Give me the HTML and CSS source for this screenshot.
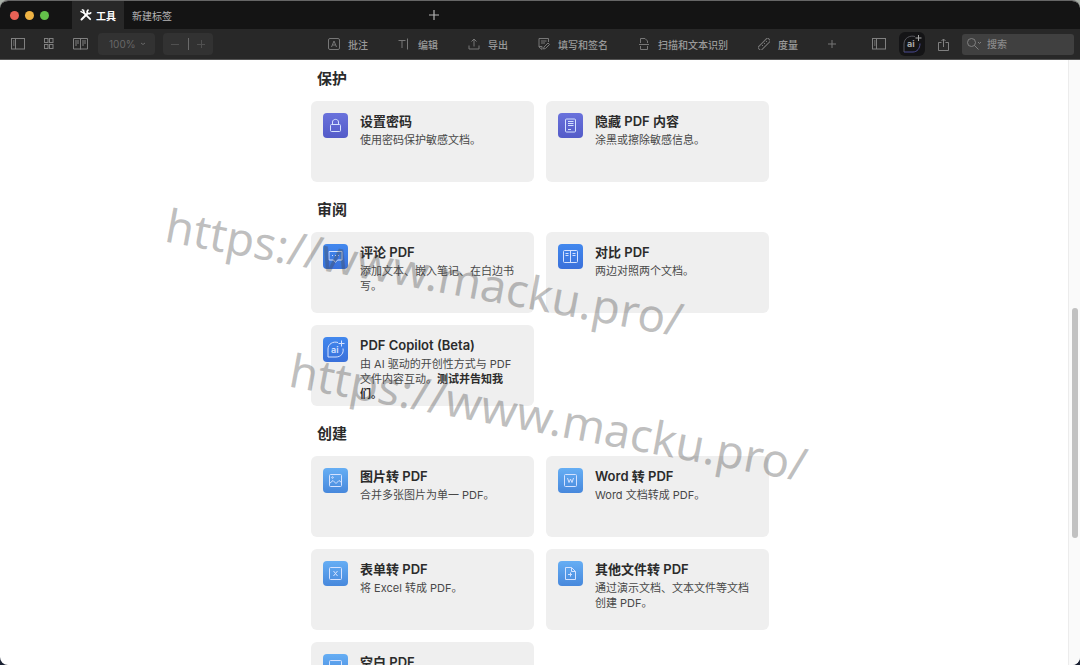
FILE: index.html
```html
<!DOCTYPE html>
<html lang="zh-CN">
<head>
    <meta charset="UTF-8">
    <meta name="viewport" content="width=device-width, initial-scale=1.0">
    <title>工具</title>
    <link rel="stylesheet" href="styles.css">
</head>
<body>
<div class="window">

    <header class="tabbar">
        <div class="lights">
            <span class="light red"></span>
            <span class="light yellow"></span>
            <span class="light green"></span>
        </div>
        <nav class="tabs">
            <button class="tab active">
                <svg width="12" height="12" viewBox="0 0 12 12" fill="none" stroke="currentColor" stroke-linecap="round"><path d="M4.2 4.2l6 6" stroke-width="1.8"/><path d="M1 2.6l1.600.8L4.200 4.200 3.600 1.400 2.400.9" stroke-width="1.500"/><path d="M1.500 10.500L7.500 4.500" stroke-width="2"/><path d="M8 1.200c-1 1-1 2.200-.3 2.900s2 .7 3-.3" stroke-width="1.700"/></svg>
                工具
            </button>
            <button class="tab">新建标签</button>
        </nav>
        <button class="new-tab" aria-label="新建">
            <svg width="10" height="10" viewBox="0 0 10 10" stroke="currentColor" stroke-width="1.200"><path d="M5 0v10M0 5h10"/></svg>
        </button>
    </header>

    <div class="toolbar">
        <div class="view-tools">
            <button class="icon-btn" aria-label="侧边栏">
                <svg width="14" height="12" viewBox="0 0 14 12" fill="none" stroke="currentColor"><rect x=".5" y=".5" width="13" height="10.500"/><path d="M4.500.5V11M2 3h1.500M2 5h1.500M2 7h1.500"/></svg>
            </button>
            <button class="icon-btn" aria-label="缩略图">
                <svg width="10" height="12" viewBox="0 0 10 12" fill="none" stroke="currentColor"><rect x=".5" y=".5" width="3.500" height="4"/><rect x="5.500" y=".5" width="3.500" height="4"/><rect x=".5" y="6.500" width="3.500" height="4"/><rect x="5.500" y="6.500" width="3.500" height="4"/></svg>
            </button>
            <button class="icon-btn" aria-label="双页">
                <svg width="15" height="12" viewBox="0 0 15 12" fill="none" stroke="currentColor"><path d="M.5.5h14v10.500H.5zM7.500.5v11M2 3h4M2 5h4M2 7h2M9 3h4M9 5h4M9 7h2"/></svg>
            </button>
            <div class="zoom">
                <select aria-label="缩放" disabled>
                    <option>100%</option>
                </select>
                <svg width="6" height="4" viewBox="0 0 6 4" fill="none" stroke="currentColor"><path d="M1 1l2 1.500L5 1"/></svg>
            </div>
            <div class="stepper">
                <button aria-label="缩小"><svg width="8" height="8" viewBox="0 0 8 8" stroke="currentColor"><path d="M0 4.500h8"/></svg></button>
                <span class="divider"></span>
                <button aria-label="放大"><svg width="8" height="8" viewBox="0 0 8 8" stroke="currentColor"><path d="M0 4.500h8M4.500 0v8"/></svg></button>
            </div>
        </div>

        <nav class="edit-tools">
            <button class="tool">
                <svg width="12" height="12" viewBox="0 0 12 12" fill="none" stroke="currentColor"><rect x=".5" y=".5" width="11" height="11" rx="1.500"/><path d="M3.500 9L6 3l2.500 6M4.500 7h3"/></svg>
                批注
            </button>
            <button class="tool">
                <svg width="12" height="12" viewBox="0 0 12 12" fill="none" stroke="currentColor"><path d="M.5 2.500h7M4 2.500V10M9.500.5v11"/></svg>
                编辑
            </button>
            <button class="tool">
                <svg width="12" height="12" viewBox="0 0 12 12" fill="none" stroke="currentColor"><path d="M1 7.500V11h10V7.500M6 8.500V1M3.500 3.500L6 1l2.500 2.500"/></svg>
                导出
            </button>
            <button class="tool">
                <svg width="12" height="12" viewBox="0 0 12 12" fill="none" stroke="currentColor"><path d="M4 11.500L1 9V.5h9.500V4M3 3h5.500M3 5h4M1 8.500h3v3M5.500 11l.5-2 4-4 1.500 1.500-4 4z"/></svg>
                填写和签名
            </button>
            <button class="tool">
                <svg width="12" height="12" viewBox="0 0 12 12" fill="none" stroke="currentColor"><path d="M2.500 5V.5H7L9.500 3v2M2.500 8v3.500h7V8M1 6.500h10"/></svg>
                扫描和文本识别
            </button>
            <button class="tool">
                <svg width="12" height="12" viewBox="0 0 12 12" fill="none" stroke="currentColor"><rect x="-1" y="4" width="14" height="4.500" rx="1" transform="rotate(-45 6 6)"/><path d="M4 7l1 1M6 5l1 1M8 3l1 1"/></svg>
                度量
            </button>
            <button class="icon-btn" aria-label="添加工具">
                <svg width="8" height="8" viewBox="0 0 8 8" stroke="currentColor"><path d="M0 4h8M4 0v8"/></svg>
            </button>
        </nav>

        <div class="side-tools">
            <button class="icon-btn" aria-label="面板">
                <svg width="14" height="12" viewBox="0 0 14 12" fill="none" stroke="currentColor"><rect x=".5" y=".5" width="13" height="10.500"/><path d="M4.500.5V11M2 3h1.500M2 5h1.500M2 7h1.500"/></svg>
            </button>
            <button class="ai-btn" aria-label="AI 助手">
                <svg width="20" height="20" viewBox="0 0 20 20" fill="none"><path d="M13 2.500C8 1 2 4 2 10v8" stroke="#55555c"/><path d="M2 18h9c4 0 7-3.500 7-8.500" stroke="#4a4a92"/><path d="M16.500 1v6M13.500 4h6" stroke="#a8a8a8"/><text x="5" y="13" class="ai-text">ai</text></svg>
            </button>
            <button class="icon-btn" aria-label="共享">
                <svg width="11" height="13" viewBox="0 0 11 13" fill="none" stroke="currentColor"><path d="M3.500 4.500h-3v8h10v-8h-3M5.500 9V1M3.500 3l2-2 2 2"/></svg>
            </button>
            <label class="search">
                <svg width="15" height="12" viewBox="0 0 15 12" fill="none" stroke="currentColor"><circle cx="4.500" cy="4.500" r="4"/><path d="M7.500 7.500l4 4M11 4l1.500 1.500L14 4"/></svg>
                <input type="search" placeholder="搜索" aria-label="搜索">
            </label>
        </div>
    </div>

    <main class="content">
        <section>
            <h2>保护</h2>
            <div class="cards">
                <a class="card" href="#">
                    <span class="badge protect"><svg width="15" height="15" viewBox="0 0 15 15"><rect x="2.500" y="6.500" width="10" height="7" rx="1"/><path d="M4.500 6.500V4c0-3.500 6-3.500 6 0v2.500"/></svg></span>
                    <div class="info">
                        <h3>设置密码</h3>
                        <p>使用密码保护敏感文档。</p>
                    </div>
                </a>
                <a class="card" href="#">
                    <span class="badge protect"><svg width="15" height="15" viewBox="0 0 15 15"><rect x="2.500" y="1" width="10" height="13" rx="1"/><path d="M5 3.500h5.500M5 5.500h5.500M5 7.500h5.500M5 11.500h3"/></svg></span>
                    <div class="info">
                        <h3>隐藏 PDF 内容</h3>
                        <p>涂黑或擦除敏感信息。</p>
                    </div>
                </a>
            </div>
        </section>

        <section>
            <h2>审阅</h2>
            <div class="cards">
                <a class="card" href="#">
                    <span class="badge review"><svg width="15" height="15" viewBox="0 0 15 15"><path d="M1 2.500h13v8.500H9.500L7.500 13.500 5.500 11H1zM4 6.500h1M7 6.500h1M10 6.500h1"/></svg></span>
                    <div class="info">
                        <h3>评论 PDF</h3>
                        <p>添加文本、嵌入笔记、在白边书写。</p>
                    </div>
                </a>
                <a class="card" href="#">
                    <span class="badge review"><svg width="15" height="15" viewBox="0 0 15 15"><rect x=".5" y="1.500" width="14" height="12" rx="1"/><path d="M7.500 1.500v12M2.500 4.500h3M2.500 6.500h3M9.500 4.500h3M9.500 6.500h3"/></svg></span>
                    <div class="info">
                        <h3>对比 PDF</h3>
                        <p>两边对照两个文档。</p>
                    </div>
                </a>
                <a class="card" href="#">
                    <span class="badge review"><svg width="19" height="19" viewBox="0 0 19 19"><path d="M12 2.500C7 1 2 4 2 9v8h8c5 0 8-4 7-8.500M15.500.5v6M12.500 3.500h6"/><text x="5" y="13" class="badge-text">ai</text></svg></span>
                    <div class="info">
                        <h3>PDF Copilot (Beta)</h3>
                        <p>由 AI 驱动的开创性方式与 PDF 文件内容互动。<strong>测试并告知我们。</strong></p>
                    </div>
                </a>
            </div>
        </section>

        <section>
            <h2>创建</h2>
            <div class="cards">
                <a class="card" href="#">
                    <span class="badge create"><svg width="15" height="15" viewBox="0 0 15 15"><rect x="1.500" y="1.500" width="12" height="12" rx="1"/><circle cx="4.500" cy="4.500" r=".8"/><path d="M1.500 10.500L5 7.500l3 3 3-3 2.500 2"/></svg></span>
                    <div class="info">
                        <h3>图片转 PDF</h3>
                        <p>合并多张图片为单一 PDF。</p>
                    </div>
                </a>
                <a class="card" href="#">
                    <span class="badge create"><svg width="15" height="15" viewBox="0 0 15 15"><rect x="1.500" y="1.500" width="12" height="12" rx="1"/><path d="M4.500 5l1.500 4.500L7.500 6 9 9.500 10.500 5"/></svg></span>
                    <div class="info">
                        <h3>Word 转 PDF</h3>
                        <p>Word 文档转成 PDF。</p>
                    </div>
                </a>
                <a class="card" href="#">
                    <span class="badge create"><svg width="15" height="15" viewBox="0 0 15 15"><rect x="1.500" y="1.500" width="12" height="12" rx="1"/><path d="M5.500 5l4 5M9.500 5l-4 5"/></svg></span>
                    <div class="info">
                        <h3>表单转 PDF</h3>
                        <p>将 Excel 转成 PDF。</p>
                    </div>
                </a>
                <a class="card" href="#">
                    <span class="badge create"><svg width="15" height="15" viewBox="0 0 15 15"><path d="M2.500 1.500h6l4 4v8h-10zM8.500 1.500v4h4M5 8.500h4M7.500 6.500v4"/></svg></span>
                    <div class="info">
                        <h3>其他文件转 PDF</h3>
                        <p>通过演示文档、文本文件等文档创建 PDF。</p>
                    </div>
                </a>
                <a class="card" href="#">
                    <span class="badge create"><svg width="15" height="15" viewBox="0 0 15 15"><rect x="1.500" y="1.500" width="12" height="12" rx="1"/></svg></span>
                    <div class="info">
                        <h3>空白 PDF</h3>
                    </div>
                </a>
            </div>
        </section>

        <div class="scrollbar"><span class="thumb"></span></div>
    </main>

    <div class="watermark first">https://www.macku.pro/</div>
    <div class="watermark second">https://www.macku.pro/</div>
</div>
</body>
</html>
```

FILE: styles.css
```css
:root {
    --tabbar: #141414;
    --toolbar: #282828;
    --control: #323232;
    --muted: #808080;
    --card: #efefef;
    --text: #2b2b2b;
}
* {
    box-sizing: border-box;
}
body {
    margin: 0;
    background: linear-gradient(#a9b0a8, #1b2233);
    font-family: Inter, "Noto Sans CJK SC", sans-serif;
    color: var(--text);
}
button {
    display: flex;
    align-items: center;
    padding: 0;
    border: 0;
    background: none;
    color: inherit;
    font: inherit;
}
svg {
    flex: none;
}
.window {
    position: relative;
    display: flex;
    flex-direction: column;
    height: 100vh;
    overflow: hidden;
    border-top: 1px solid #666;
    border-radius: 8px;
    background: #fff;
}

/* 标签栏 */
.tabbar {
    display: flex;
    flex: none;
    height: 28px;
    background: var(--tabbar);
    color: #b4b4b4;
    font-size: 10px;
}
.lights {
    display: flex;
    align-items: center;
    gap: 6px;
    width: 72px;
    padding-left: 10px;
}
.light {
    width: 9px;
    height: 9px;
    border-radius: 50%;
}
.red {
    background: #ea6256;
}
.yellow {
    background: #f0b444;
}
.green {
    background: #63c04a;
}
.tabs {
    display: flex;
    width: 357px;
}
.tab {
    gap: 4px;
    padding: 0 8px;
}
.tab.active {
    background: var(--toolbar);
    color: #fff;
    font-weight: 700;
}

/* 工具栏 */
.toolbar {
    display: flex;
    flex: none;
    align-items: center;
    height: 31px;
    padding: 0 6px 0 11px;
    border-bottom: 1px solid #555;
    background: var(--toolbar);
    color: var(--muted);
    font-size: 10px;
}
.view-tools {
    display: flex;
    align-items: center;
}
.view-tools .icon-btn {
    margin-right: 19px;
}
.view-tools .icon-btn + .icon-btn + .icon-btn {
    margin-right: 10px;
}
.zoom {
    display: flex;
    align-items: center;
    width: 57px;
    height: 22px;
    margin-right: 8px;
    padding: 0 9px 0 11px;
    border-radius: 4px;
    background: var(--control);
    color: #686868;
}
.zoom select {
    flex: 1;
    min-width: 0;
    padding: 0;
    border: 0;
    background: none;
    appearance: none;
    color: inherit;
    font: inherit;
    opacity: 1;
}
.stepper {
    display: flex;
    align-items: center;
    justify-content: space-between;
    width: 50px;
    height: 22px;
    padding: 0 8px;
    border-radius: 4px;
    background: var(--control);
    color: #505050;
}
.divider {
    width: 1px;
    height: 12px;
    background: #6a6a6a;
}
.edit-tools {
    display: flex;
    align-items: center;
    gap: 30px;
    margin-left: auto;
    color: #999;
}
.edit-tools svg {
    color: #777;
}
.tool {
    gap: 8px;
    font-weight: 500;
    white-space: nowrap;
}
.side-tools {
    display: flex;
    align-items: center;
    gap: 13px;
    margin-left: 36px;
}
.ai-btn {
    justify-content: center;
    width: 26px;
    height: 24px;
    border-radius: 6px;
    background: #141416;
}
.ai-text {
    fill: #a8a8a8;
    font-size: 9px;
    font-weight: 700;
}
.search {
    display: flex;
    align-items: center;
    gap: 5px;
    width: 112px;
    height: 21px;
    padding: 0 5px;
    border-radius: 3px;
    background: #404040;
}
.search input {
    flex: 1;
    min-width: 0;
    padding: 0;
    border: 0;
    outline: none;
    background: none;
    color: #ccc;
    font: inherit;
    font-weight: 500;
}
.search input::placeholder {
    color: #8a8a8a;
}

/* 工具列表 */
.content {
    position: relative;
    display: flex;
    flex: 1;
    flex-direction: column;
    align-items: center;
    gap: 18px;
    min-height: 0;
    padding-top: 9px;
    overflow: hidden;
}
section {
    flex: none;
    width: 100%;
    max-width: 458px;
}
h2 {
    margin: 0 0 12px 6px;
    font-size: 15px;
    font-weight: 600;
    line-height: 20px;
}
.cards {
    display: grid;
    grid-template-columns: 1fr 1fr;
    gap: 12px;
}
.card {
    display: flex;
    gap: 12px;
    min-height: 81px;
    padding: 12px 12px 0;
    border-radius: 6px;
    background: var(--card);
    color: inherit;
    text-decoration: none;
}
.badge {
    display: flex;
    flex: none;
    align-items: center;
    justify-content: center;
    width: 25px;
    height: 25px;
    border-radius: 4px;
}
.badge svg {
    fill: none;
    stroke: #d5e2ff;
}
.badge .badge-text {
    fill: #d5e2ff;
    stroke: none;
    font-size: 9px;
    font-weight: 600;
}
.protect {
    background: linear-gradient(#6a72dc, #535bc8);
}
.review {
    background: linear-gradient(#4288ee, #3a70da);
}
.create {
    background: linear-gradient(#66aef4, #4788dc);
}
h3 {
    margin: 0;
    font-size: 13px;
    font-weight: 600;
    line-height: 17px;
}
p {
    margin: 3px 0 0;
    color: #484848;
    font-size: 11px;
    line-height: 15px;
}
strong {
    color: var(--text);
    font-weight: 600;
}
.scrollbar {
    position: absolute;
    top: 0;
    right: 0;
    bottom: 0;
    width: 12px;
    border-left: 1px solid #ececec;
    background: #fafafa;
}
.thumb {
    position: absolute;
    top: 41%;
    left: 3px;
    width: 6px;
    height: 38%;
    border-radius: 3px;
    background: #c1c1c1;
}

/* 水印 */
.watermark {
    position: absolute;
    color: rgba(70, 70, 70, 0.34);
    font-family: "Noto Sans", sans-serif;
    font-size: 46px;
    line-height: 60px;
    white-space: nowrap;
    transform: rotate(10.5deg);
    transform-origin: left bottom;
    pointer-events: none;
}
.first {
    top: 192px;
    left: 161px;
}
.second {
    top: 337px;
    left: 285px;
}
```
